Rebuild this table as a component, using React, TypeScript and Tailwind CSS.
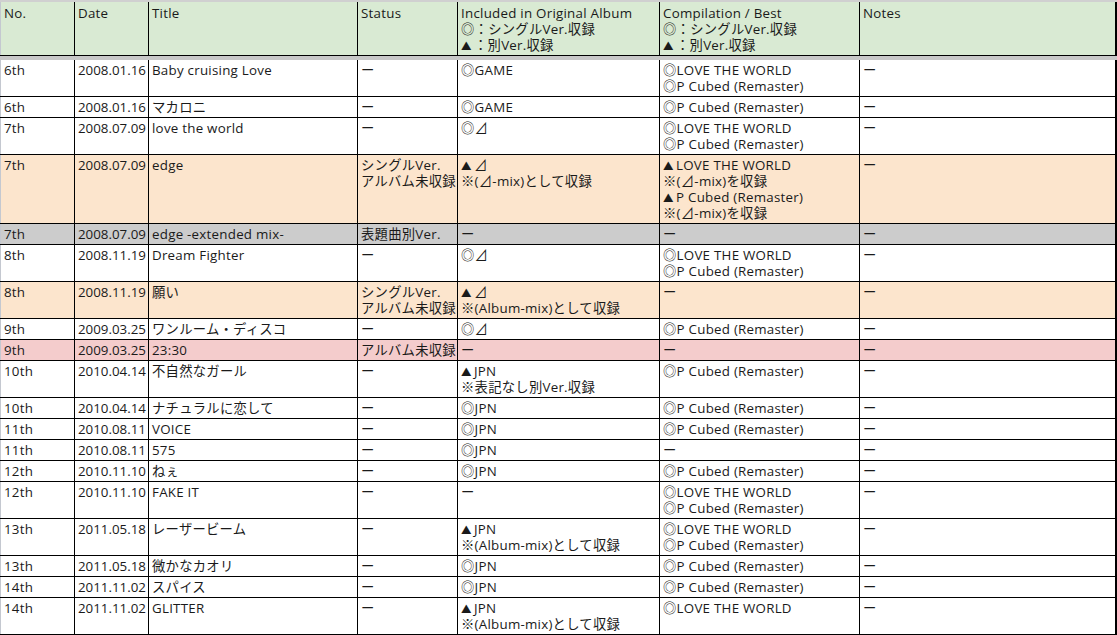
import React from "react";

type Row = {
  no: string;
  date: string;
  title: string;
  status: string[];
  album: string[];
  comp: string[];
  notes: string[];
  bg: string;
};

const D = "ー";

const rows: Row[] = [
  { no: "6th", date: "2008.01.16", title: "Baby cruising Love", status: [D], album: ["◎GAME"], comp: ["◎LOVE THE WORLD", "◎P Cubed (Remaster)"], notes: [D], bg: "bg-white" },
  { no: "6th", date: "2008.01.16", title: "マカロニ", status: [D], album: ["◎GAME"], comp: ["◎P Cubed (Remaster)"], notes: [D], bg: "bg-white" },
  { no: "7th", date: "2008.07.09", title: "love the world", status: [D], album: ["◎⊿"], comp: ["◎LOVE THE WORLD", "◎P Cubed (Remaster)"], notes: [D], bg: "bg-white" },
  { no: "7th", date: "2008.07.09", title: "edge", status: ["シングルVer.", "アルバム未収録"], album: ["▲⊿", "※(⊿-mix)として収録"], comp: ["▲LOVE THE WORLD", "※(⊿-mix)を収録", "▲P Cubed (Remaster)", "※(⊿-mix)を収録"], notes: [D], bg: "bg-[#fce5cd]" },
  { no: "7th", date: "2008.07.09", title: "edge -extended mix-", status: ["表題曲別Ver."], album: [D], comp: [D], notes: [D], bg: "bg-[#cccccc]" },
  { no: "8th", date: "2008.11.19", title: "Dream Fighter", status: [D], album: ["◎⊿"], comp: ["◎LOVE THE WORLD", "◎P Cubed (Remaster)"], notes: [D], bg: "bg-white" },
  { no: "8th", date: "2008.11.19", title: "願い", status: ["シングルVer.", "アルバム未収録"], album: ["▲⊿", "※(Album-mix)として収録"], comp: [D], notes: [D], bg: "bg-[#fce5cd]" },
  { no: "9th", date: "2009.03.25", title: "ワンルーム・ディスコ", status: [D], album: ["◎⊿"], comp: ["◎P Cubed (Remaster)"], notes: [D], bg: "bg-white" },
  { no: "9th", date: "2009.03.25", title: "23:30", status: ["アルバム未収録"], album: [D], comp: [D], notes: [D], bg: "bg-[#f4cccc]" },
  { no: "10th", date: "2010.04.14", title: "不自然なガール", status: [D], album: ["▲JPN", "※表記なし別Ver.収録"], comp: ["◎P Cubed (Remaster)"], notes: [D], bg: "bg-white" },
  { no: "10th", date: "2010.04.14", title: "ナチュラルに恋して", status: [D], album: ["◎JPN"], comp: ["◎P Cubed (Remaster)"], notes: [D], bg: "bg-white" },
  { no: "11th", date: "2010.08.11", title: "VOICE", status: [D], album: ["◎JPN"], comp: ["◎P Cubed (Remaster)"], notes: [D], bg: "bg-white" },
  { no: "11th", date: "2010.08.11", title: "575", status: [D], album: ["◎JPN"], comp: [D], notes: [D], bg: "bg-white" },
  { no: "12th", date: "2010.11.10", title: "ねぇ", status: [D], album: ["◎JPN"], comp: ["◎P Cubed (Remaster)"], notes: [D], bg: "bg-white" },
  { no: "12th", date: "2010.11.10", title: "FAKE IT", status: [D], album: [D], comp: ["◎LOVE THE WORLD", "◎P Cubed (Remaster)"], notes: [D], bg: "bg-white" },
  { no: "13th", date: "2011.05.18", title: "レーザービーム", status: [D], album: ["▲JPN", "※(Album-mix)として収録"], comp: ["◎LOVE THE WORLD", "◎P Cubed (Remaster)"], notes: [D], bg: "bg-white" },
  { no: "13th", date: "2011.05.18", title: "微かなカオリ", status: [D], album: ["◎JPN"], comp: ["◎P Cubed (Remaster)"], notes: [D], bg: "bg-white" },
  { no: "14th", date: "2011.11.02", title: "スパイス", status: [D], album: ["◎JPN"], comp: ["◎P Cubed (Remaster)"], notes: [D], bg: "bg-white" },
  { no: "14th", date: "2011.11.02", title: "GLITTER", status: [D], album: ["▲JPN", "※(Album-mix)として収録"], comp: ["◎LOVE THE WORLD"], notes: [D], bg: "bg-white" },
];

const grid = "grid grid-cols-[75px_74px_209px_100px_202px_200px_257px]";

function Line({ text }: { text: string }) {
  if (text.startsWith("▲")) {
    return (
      <div className="h-4 leading-4">
        <span className="inline-block w-[13px] text-[10.5px] leading-4">▲</span>
        {text.slice(1)}
      </div>
    );
  }
  return <div className="h-4 leading-4">{text}</div>;
}

function Cell({ lines, first, last, tight }: { lines: string[]; first?: boolean; last?: boolean; tight?: boolean }) {
  return (
    <div
      className={
        "pl-[3px] pt-[2px] pb-[2px] whitespace-nowrap overflow-hidden border-black " +
        (tight ? "tracking-normal " : "tracking-[0.25px] ") +
        (first ? "border-l border-l-[#c4c8d0] border-r " : "") +
        (last ? "border-r-2 " : "") +
        (!first && !last ? "border-r " : "")
      }
    >
      {lines.map((l, i) => (
        <Line key={i} text={l} />
      ))}
    </div>
  );
}

export default function App() {
  return (
    <div
      className="w-[1117px] h-[635px] overflow-hidden bg-white text-[13.33px] text-[#1a1a1a]"
      style={{ fontFamily: '"Open Sans", "Noto Sans CJK JP", sans-serif' }}
    >
      <div className="h-[2px] bg-[#d0d0d0]" />
      <div className={grid + " bg-[#d9ead3] border-b border-black tracking-[0.25px]"}>
        <div className="pl-[3px] pt-[3px] pb-[2px] border-l border-l-[#c4c8d0] border-r border-black leading-4">No.</div>
        <div className="pl-[3px] pt-[3px] pb-[2px] border-r border-black leading-4">Date</div>
        <div className="pl-[3px] pt-[3px] pb-[2px] border-r border-black leading-4">Title</div>
        <div className="pl-[3px] pt-[3px] pb-[2px] border-r border-black leading-4">Status</div>
        <div className="pl-[3px] pt-[3px] pb-[2px] border-r border-black leading-4 whitespace-nowrap">
          <div className="h-4">Included in Original Album</div>
          <div className="h-4">◎：シングルVer.収録</div>
          <div className="h-4">
            <span className="inline-block w-[13px] text-[10.5px]">▲</span>：別Ver.収録
          </div>
        </div>
        <div className="pl-[3px] pt-[3px] pb-[2px] border-r border-black leading-4 whitespace-nowrap">
          <div className="h-4">Compilation / Best</div>
          <div className="h-4">◎：シングルVer.収録</div>
          <div className="h-4">
            <span className="inline-block w-[13px] text-[10.5px]">▲</span>：別Ver.収録
          </div>
        </div>
        <div className="pl-[3px] pt-[3px] pb-[2px] border-r-2 border-black leading-4">Notes</div>
      </div>
      <div className="h-[4px] bg-[#c8c8c8]" />
      {rows.map((r, i) => (
        <div key={i} className={grid + " border-b border-black " + r.bg}>
          <Cell lines={[r.no]} first />
          <Cell lines={[r.date]} tight />
          <Cell lines={[r.title]} />
          <Cell lines={r.status} />
          <Cell lines={r.album} />
          <Cell lines={r.comp} />
          <Cell lines={r.notes} last />
        </div>
      ))}
    </div>
  );
}
